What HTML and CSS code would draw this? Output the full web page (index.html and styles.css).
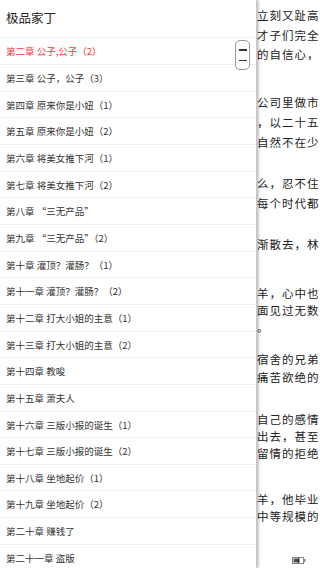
FILE: index.html
```html
<!DOCTYPE html>
<html lang="zh">
<head>
<meta charset="utf-8">
<title>极品家丁</title>
<link rel="stylesheet" href="styles.css">
</head>
<body>
<div class="screen">
  <aside class="drawer">
    <div class="drawer-title">极品家丁</div>
    <ul class="chapters">
      <li class="chapter active">第二章 公子,公子（2）</li>
      <li class="chapter">第三章 公子，公子（3）</li>
      <li class="chapter">第四章 原来你是小妞（1）</li>
      <li class="chapter">第五章 原来你是小妞（2）</li>
      <li class="chapter">第六章 将美女推下河（1）</li>
      <li class="chapter">第七章 将美女推下河（2）</li>
      <li class="chapter">第八章 “三无产品”</li>
      <li class="chapter">第九章 “三无产品”（2）</li>
      <li class="chapter">第十章 灌顶？灌肠？（1）</li>
      <li class="chapter">第十一章 灌顶？灌肠？（2）</li>
      <li class="chapter">第十二章 打大小姐的主意（1）</li>
      <li class="chapter">第十三章 打大小姐的主意（2）</li>
      <li class="chapter">第十四章 教唆</li>
      <li class="chapter">第十五章 萧夫人</li>
      <li class="chapter">第十六章 三版小报的诞生（1）</li>
      <li class="chapter">第十七章 三版小报的诞生（2）</li>
      <li class="chapter">第十八章 坐地起价（1）</li>
      <li class="chapter">第十九章 坐地起价（2）</li>
      <li class="chapter">第二十章 赚钱了</li>
      <li class="chapter">第二十一章 盗版</li>
    </ul>
    <div class="fast-scroll"><span class="bar"></span><span class="bar"></span></div>
  </aside>
  <main class="reader">
    <div class="para pa"><div>立刻又趾高</div><div>才子们完全</div><div>的自信心，</div></div>
    <div class="para pb"><div>公司里做市</div><div>，以二十五</div><div>自然不在少</div></div>
    <div class="para pc"><div>么，忍不住</div><div>每个时代都</div></div>
    <div class="para pd"><div>渐散去，林</div></div>
    <div class="para pe"><div>羊，心中也</div><div>面见过无数</div><div class="tail">。</div></div>
    <div class="para pf"><div>宿舍的兄弟</div><div>痛苦欲绝的</div></div>
    <div class="para pg"><div>自己的感情</div><div>出去，甚至</div><div>留情的拒绝</div></div>
    <div class="para ph"><div>羊，他毕业</div><div>中等规模的</div></div>
    <div class="status">
      <svg class="battery" width="14" height="7" viewBox="0 0 14 7">
        <rect x="0.5" y="0.5" width="11" height="6" fill="none" stroke="#888" stroke-width="1"/>
        <rect x="1.5" y="1.5" width="6" height="4" fill="#555"/>
        <rect x="12" y="2" width="1.5" height="3" fill="#888"/>
        <path d="M7 0.8 L5.5 3.8 L7 3.8 L6 6.2" stroke="#222" stroke-width="0.9" fill="none"/>
      </svg>
    </div>
  </main>
</div>
</body>
</html>
```
FILE: styles.css
```css
html, body {
  margin: 0;
  padding: 0;
  background: #fff;
}
body {
  font-family: "Noto Sans CJK SC", "Noto Sans", sans-serif;
  color: #333;
}
.screen {
  display: flex;
  width: 320px;
  height: 568px;
  overflow: hidden;
}
.drawer {
  position: relative;
  z-index: 2;
  flex: 0 0 257px;
  background: #fff;
  box-shadow: 1px 0 3px rgba(0, 0, 0, 0.35);
  border-right: 1px solid #c8c8c8;
  box-sizing: border-box;
}
.drawer-title {
  height: 38.33px;
  box-sizing: border-box;
  border-bottom: 1px solid #efefef;
  padding-left: 6px;
  font-size: 12.5px;
  line-height: 36px;
  color: #222;
}
.chapters {
  list-style: none;
  margin: 0;
  padding: 0;
}
.chapter {
  height: 26.67px;
  box-sizing: border-box;
  border-bottom: 1px solid #efefef;
  padding-left: 6px;
  font-size: 9.5px;
  line-height: 26px;
  color: #333;
  white-space: nowrap;
}
.chapter.active {
  color: #f23b3b;
}
.fast-scroll {
  position: absolute;
  left: 235px;
  top: 40px;
  width: 15px;
  height: 30px;
  box-sizing: border-box;
  border: 1px solid #9a9a9a;
  border-radius: 5px;
  background: #fff;
  display: flex;
  flex-direction: column;
  align-items: center;
  justify-content: center;
  gap: 9px;
}
.fast-scroll .bar {
  display: block;
  width: 8px;
  height: 1.5px;
  background: #333;
}
.reader {
  flex: 1;
  position: relative;
  overflow: hidden;
  font-size: 11.5px;
  color: #222;
  letter-spacing: 1px;
  white-space: nowrap;
  text-align: right;
  padding-right: 10px;
}
.para div {
  line-height: 19.5px;
  height: 19.5px;
  overflow: visible;
}
.para .tail {
  text-align: left;
  padding-left: 0;
}
.pa { margin-top: 6px; }
.pb { margin-top: 27px; }
.pb div, .pc div, .pd div { height: 20px; line-height: 20px; }
.pc { margin-top: 21px; }
.pd { margin-top: 21px; }
.pe { margin-top: 31px; }
.pe div, .pg div, .ph div { height: 17px; line-height: 17px; }
.pf { margin-top: 14px; }
.pf div { height: 18px; line-height: 18px; }
.pg { margin-top: 25px; }
.ph { margin-top: 29px; }
.status {
  position: absolute;
  right: 14px;
  bottom: 4px;
  line-height: 0;
}
```
